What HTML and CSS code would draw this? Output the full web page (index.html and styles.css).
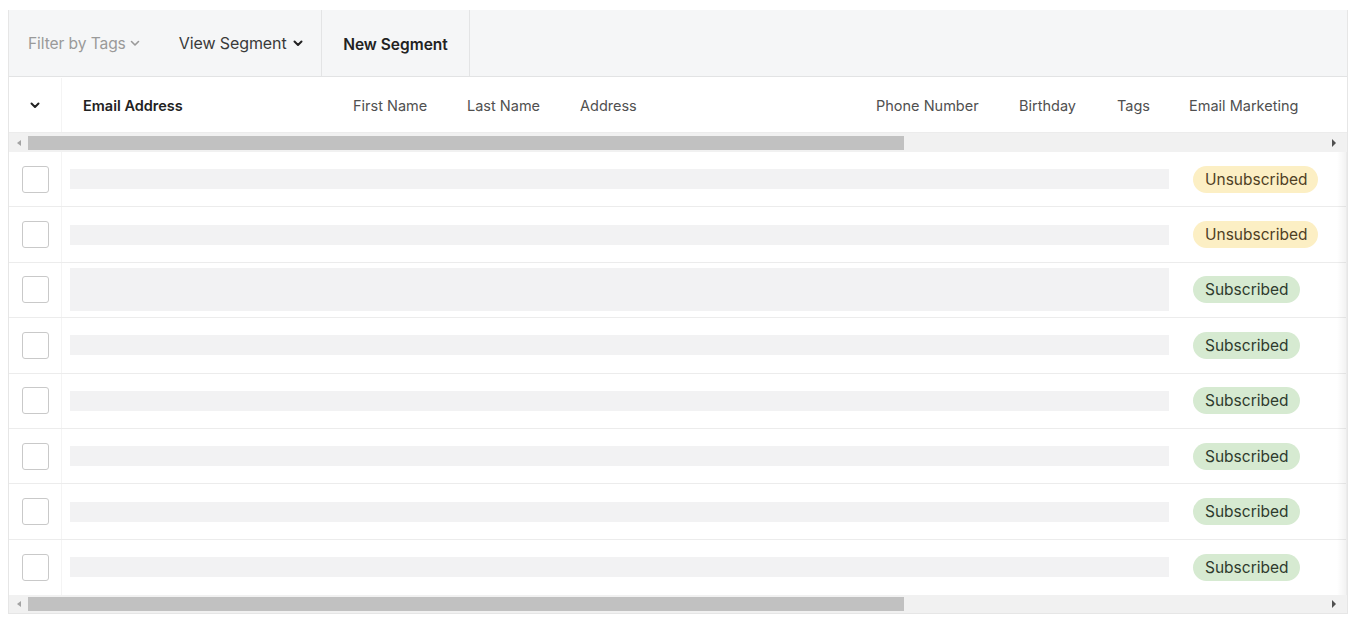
FILE: index.html
```html
<!DOCTYPE html>
<html>
<head>
<meta charset="utf-8">
<link rel="stylesheet" href="styles.css">
</head>
<body>
<div class="panel">
  <div class="toolbar">
    <div class="tb-group">
      <span class="tb-item muted">Filter by Tags <svg class="chev" viewBox="0 0 10 7"><path d="M1.5 1.5 L5 5 L8.5 1.5" /></svg></span>
      <span class="tb-item">View Segment <svg class="chev dark" viewBox="0 0 10 7"><path d="M1.5 1.5 L5 5 L8.5 1.5" /></svg></span>
    </div>
    <div class="tb-btn">New Segment</div>
  </div>
  <div class="header">
    <div class="cell-check"><svg class="chev dark" viewBox="0 0 10 7"><path d="M1.5 1.5 L5 5 L8.5 1.5" /></svg></div>
    <div class="col c-email strong">Email Address</div>
    <div class="col c-first">First Name</div>
    <div class="col c-last">Last Name</div>
    <div class="col c-addr">Address</div>
    <div class="col c-phone">Phone Number</div>
    <div class="col c-bday">Birthday</div>
    <div class="col c-tags">Tags</div>
    <div class="col c-mkt">Email Marketing</div>
  </div>
  <div class="hscroll"><span class="arr left"></span><div class="thumb"></div><span class="arr right"></span></div>
  <div class="rows">
    <div class="row"><div class="cell-check"><span class="box"></span></div><div class="ph"></div><div class="status"><span class="badge unsub">Unsubscribed</span></div></div>
    <div class="row"><div class="cell-check"><span class="box"></span></div><div class="ph"></div><div class="status"><span class="badge unsub">Unsubscribed</span></div></div>
    <div class="row"><div class="cell-check"><span class="box"></span></div><div class="ph tall"></div><div class="status"><span class="badge sub">Subscribed</span></div></div>
    <div class="row"><div class="cell-check"><span class="box"></span></div><div class="ph"></div><div class="status"><span class="badge sub">Subscribed</span></div></div>
    <div class="row"><div class="cell-check"><span class="box"></span></div><div class="ph"></div><div class="status"><span class="badge sub">Subscribed</span></div></div>
    <div class="row"><div class="cell-check"><span class="box"></span></div><div class="ph"></div><div class="status"><span class="badge sub">Subscribed</span></div></div>
    <div class="row"><div class="cell-check"><span class="box"></span></div><div class="ph"></div><div class="status"><span class="badge sub">Subscribed</span></div></div>
    <div class="row last"><div class="cell-check"><span class="box"></span></div><div class="ph"></div><div class="status"><span class="badge sub">Subscribed</span></div></div>
  </div>
  <div class="hscroll bottom"><span class="arr left"></span><div class="thumb"></div><span class="arr right"></span></div>
</div>
</body>
</html>
```
FILE: styles.css
```css
* { box-sizing: border-box; }
html, body { margin: 0; padding: 0; background: #fff; }
body { font-family: Inter, "Liberation Sans", sans-serif; color: #333; }
.panel {
  margin: 10px 0 0 8px;
  width: 1340px;
  border-left: 1px solid #e6e6e6;
  border-right: 1px solid #e6e6e6;
  border-bottom: 1px solid #e6e6e6;
}
.toolbar {
  height: 67px;
  background: #f5f6f7;
  border-bottom: 1px solid #e2e3e4;
  display: flex;
  align-items: stretch;
}
.tb-group {
  display: flex;
  align-items: center;
  gap: 39px;
  padding: 0 0 0 19px;
  border-right: 1px solid #e3e4e5;
  width: 313px;
  white-space: nowrap;
}
.tb-item { font-size: 16px; color: #3a3a3a; display: inline-flex; align-items: center; gap: 6px; letter-spacing: -0.1px; white-space: nowrap; }
.tb-item.muted { color: #9a9a9a; font-size: 15.6px; gap: 4px; }
.chev { width: 10px; height: 7px; fill: none; stroke: #9a9a9a; stroke-width: 1.6; stroke-linecap: round; stroke-linejoin: round; flex: none; }
.chev.dark { stroke: #222; stroke-width: 2; }
.tb-btn {
  width: 148px;
  display: flex; align-items: center; justify-content: center;
  font-size: 15.5px; font-weight: 600; color: #222;
  border-right: 1px solid #e3e4e5;
  padding-top: 2px;
  white-space: nowrap;
}
.header {
  height: 56px;
  display: flex;
  align-items: center;
  font-size: 14.5px;
  color: #505050;
  border-bottom: 1px solid #ececec;
  padding-top: 1px;
}
.cell-check {
  width: 53px;
  flex: none;
  display: flex; align-items: center; justify-content: center;
  border-right: 1px solid #f4f4f4;
  height: 100%;
}
.col { flex: none; white-space: nowrap; }
.strong { font-weight: 600; color: #222; }
.c-email { width: 291px; padding-left: 21px; }
.c-first { width: 114px; }
.c-last { width: 113px; }
.c-addr { width: 296px; }
.c-phone { width: 143px; }
.c-bday { width: 98px; }
.c-tags { width: 72px; }
.c-mkt { width: auto; }
.hscroll {
  height: 19px;
  background: #f1f1f1;
  display: flex;
  align-items: center;
  padding: 0 4px 0 0;
}
.hscroll.bottom { height: 18px; }
.thumb { width: 876px; height: 14px; background: #c1c1c1; }
.arr { width: 19px; height: 100%; display: flex; align-items: center; justify-content: center; flex: none; }
.arr.left::before { content: ""; border-style: solid; border-width: 3.5px 4px 3.5px 0; border-color: transparent #a3a3a3 transparent transparent; }
.arr.right { margin-left: auto; }
.arr.right::before { content: ""; border-style: solid; border-width: 4px 0 4px 4px; border-color: transparent transparent transparent #505050; }
.rows { position: relative; }
.rows::after {
  content: ""; position: absolute; top: 0; right: 0; width: 9px; height: 100%;
  background: linear-gradient(to right, rgba(0,0,0,0), rgba(0,0,0,0.05));
  border-right: 1px solid #ebebeb;
}
.row {
  height: 55.4px;
  display: flex;
  align-items: center;
  border-bottom: 1px solid #ececec;
}
.row.last { border-bottom: none; }
.box {
  width: 27px; height: 27px;
  border: 1px solid #c9c9c9;
  border-radius: 3px;
  background: #fff;
}
.ph {
  margin-left: 8px;
  width: 1099px;
  height: 20px;
  background: #f2f2f3;
}
.ph.tall { height: 43px; }
.status { padding-left: 24px; display: flex; align-items: center; }
.badge {
  font-size: 15.5px;
  padding: 4px 11px 4px 12px;
  border-radius: 14px;
  line-height: 19px;
}
.badge.unsub { background: #fcefc4; color: #4f3f25; }
.badge.sub { background: #d6ead1; color: #2f3b2e; }
```
